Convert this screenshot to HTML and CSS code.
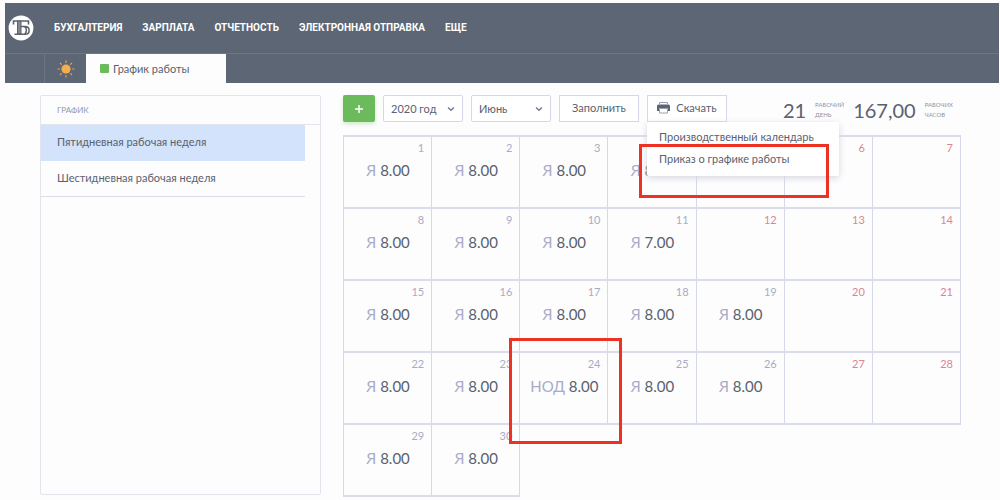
FILE: index.html
```
<!DOCTYPE html>
<html lang="ru">
<head>
<meta charset="utf-8">
<meta name="viewport" content="width=device-width, initial-scale=1">
<title>График работы</title>
<link rel="stylesheet" href="styles.css">
</head>
<body>
<header class="header">
  <div class="topbar">
    <a class="logo" href="#" aria-label="Главная">
      <svg viewBox="0 0 26 26" width="26" height="26" aria-hidden="true">
        <circle cx="13" cy="13" r="12.4" fill="#fff"/>
        <path d="M5.500 9.500V6H20.500V9.500" fill="none" stroke="#5b6069" stroke-width="1.600"/>
        <path d="M9.500 6h3.500v13h-3.500z" fill="#85888e" stroke="#5b6069" stroke-width="1"/>
        <path d="M6.500 19.300H17C22.500 19.300 22.500 11.500 17 11.500H13M16.500 11.500c2.500 1.500 2.500 6 0 7.800" fill="none" stroke="#5b6069" stroke-width="1.500"/>
      </svg>
    </a>
    <nav class="nav">
      <a href="#">БУХГАЛТЕРИЯ</a>
      <a href="#">ЗАРПЛАТА</a>
      <a href="#">ОТЧЕТНОСТЬ</a>
      <a href="#">ЭЛЕКТРОННАЯ ОТПРАВКА</a>
      <a href="#">ЕЩЕ</a>
    </nav>
  </div>
  <div class="tabs">
    <a class="sun-tab" href="#" aria-label="Сегодня">
      <svg viewBox="0 0 18 18" width="18" height="18" aria-hidden="true">
        <circle cx="9" cy="9" r="4.600" fill="#f5ad4e"/>
        <path d="M9 .5v2.300M9 15.200v2.300M.5 9h2.300M15.200 9h2.300M3 3l1.600 1.600M13.400 13.400L15 15M3 15l1.600-1.600M13.400 4.600L15 3" stroke="#e5a455" stroke-width="1.200"/>
      </svg>
    </a>
    <a class="tab" href="#"><span class="tab-mark"></span>График работы</a>
  </div>
</header>
<main class="content">
  <aside class="sidebar">
    <h2 class="sidebar-title">ГРАФИК</h2>
    <ul class="schedules">
      <li><a class="schedule schedule-active" href="#">Пятидневная рабочая неделя</a></li>
      <li><a class="schedule" href="#">Шестидневная рабочая неделя</a></li>
    </ul>
  </aside>
  <section class="workspace">
    <div class="toolbar">
      <button class="add" type="button" aria-label="Добавить">
        <svg viewBox="0 0 10 10" width="10" height="10" aria-hidden="true"><path d="M5 1v8M1 5h8" stroke="#fff" stroke-width="1.500"/></svg>
      </button>
      <div class="picker">
        <select class="select" aria-label="Год"><option>2020 год</option></select>
        <svg class="chevron" viewBox="0 0 8 6" width="8" height="6" aria-hidden="true"><path d="M1 1.500l3 2.700 3-2.700" fill="none" stroke="#737b8d" stroke-width="1.400"/></svg>
      </div>
      <div class="picker">
        <select class="select" aria-label="Месяц"><option>Июнь</option></select>
        <svg class="chevron" viewBox="0 0 8 6" width="8" height="6" aria-hidden="true"><path d="M1 1.500l3 2.700 3-2.700" fill="none" stroke="#737b8d" stroke-width="1.400"/></svg>
      </div>
      <button class="button" type="button">Заполнить</button>
      <div class="download">
        <button class="button" type="button" aria-expanded="true">
          <svg viewBox="0 0 13 13" width="13" height="13" aria-hidden="true">
            <path d="M2.500 3V1.500h8V3" fill="#fff" stroke="#9aa0ad"/>
            <path d="M1.500 3.500h10q1.500 0 1.500 1.500v5h-2V7H2v3H0V5q0-1.500 1.500-1.500z" fill="#5d6575"/>
            <path d="M2.500 7.500h8v4.500h-8z" fill="#fff" stroke="#9aa0ad"/>
          </svg>
          Скачать
        </button>
        <div class="menu">
          <a class="menu-item" href="#">Производственный календарь</a>
          <a class="menu-item" href="#">Приказ о графике работы</a>
          <span class="mark mark-menu"></span>
        </div>
      </div>
      <div class="totals">
        <strong class="total">21</strong>
        <span class="unit">РАБОЧИЙ<br>ДЕНЬ</span>
        <strong class="total">167,00</strong>
        <span class="unit">РАБОЧИХ<br>ЧАСОВ</span>
      </div>
    </div>
    <table class="calendar">
      <tbody>
        <tr>
          <td><div class="day">1</div><div class="hours"><i>Я</i> 8.00</div></td>
          <td><div class="day">2</div><div class="hours"><i>Я</i> 8.00</div></td>
          <td><div class="day">3</div><div class="hours"><i>Я</i> 8.00</div></td>
          <td><div class="day"></div><div class="hours"><i>Я</i> 8.00</div></td>
          <td><div class="day"></div></td>
          <td><div class="day day-off">6</div></td>
          <td><div class="day day-off">7</div></td>
        </tr>
        <tr>
          <td><div class="day">8</div><div class="hours"><i>Я</i> 8.00</div></td>
          <td><div class="day">9</div><div class="hours"><i>Я</i> 8.00</div></td>
          <td><div class="day">10</div><div class="hours"><i>Я</i> 8.00</div></td>
          <td><div class="day">11</div><div class="hours"><i>Я</i> 7.00</div></td>
          <td><div class="day day-off">12</div></td>
          <td><div class="day day-off">13</div></td>
          <td><div class="day day-off">14</div></td>
        </tr>
        <tr>
          <td><div class="day">15</div><div class="hours"><i>Я</i> 8.00</div></td>
          <td><div class="day">16</div><div class="hours"><i>Я</i> 8.00</div></td>
          <td><div class="day">17</div><div class="hours"><i>Я</i> 8.00</div></td>
          <td><div class="day">18</div><div class="hours"><i>Я</i> 8.00</div></td>
          <td><div class="day">19</div><div class="hours"><i>Я</i> 8.00</div></td>
          <td><div class="day day-off">20</div></td>
          <td><div class="day day-off">21</div></td>
        </tr>
        <tr>
          <td><div class="day">22</div><div class="hours"><i>Я</i> 8.00</div></td>
          <td><div class="day">23</div><div class="hours"><i>Я</i> 8.00</div></td>
          <td class="marked"><div class="day">24</div><div class="hours"><i>НОД</i> 8.00</div><span class="mark mark-day"></span></td>
          <td><div class="day">25</div><div class="hours"><i>Я</i> 8.00</div></td>
          <td><div class="day">26</div><div class="hours"><i>Я</i> 8.00</div></td>
          <td><div class="day day-off">27</div></td>
          <td><div class="day day-off">28</div></td>
        </tr>
        <tr>
          <td><div class="day">29</div><div class="hours"><i>Я</i> 8.00</div></td>
          <td><div class="day">30</div><div class="hours"><i>Я</i> 8.00</div></td>
        </tr>
      </tbody>
    </table>
  </section>
</main>
</body>
</html>
```
FILE: styles.css
```
* { box-sizing: border-box; }
body {
  margin: 0;
  min-height: 100vh;
  display: flex;
  flex-direction: column;
  background: #fdfdfe;
  color: #59616f;
  font-family: Lato, "Open Sans", sans-serif;
  font-size: 11px;
  line-height: 16px;
}
a { color: inherit; text-decoration: none; }
button, select { font: inherit; color: inherit; }

.header { margin: 3px 1px 0 5px; background: #5d6675; }
.topbar {
  display: flex;
  align-items: center;
  gap: 20px;
  height: 51px;
  padding-left: 3px;
  border-bottom: 1px solid #6d7685;
}
.logo, .logo svg { display: block; }
.nav {
  display: flex;
  gap: 20px;
  color: #fff;
  font-family: Roboto, "Open Sans", sans-serif;
  font-size: 10px;
  font-weight: 700;
}
.tabs { display: flex; height: 29px; padding-left: 39px; }
.sun-tab {
  display: flex;
  align-items: center;
  justify-content: center;
  width: 42px;
  border-left: 1px solid #6d7685;
}
.tab {
  display: flex;
  align-items: center;
  gap: 4px;
  width: 140px;
  padding-left: 14px;
  background: #fdfdfe;
}
.tab-mark { width: 9px; height: 9px; border-radius: 1px; background: #6bbb5c; }

.content {
  flex: 1;
  display: flex;
  gap: 22px;
  padding: 12px 39px 4px 40px;
}
.sidebar {
  width: 281px;
  margin-bottom: 2px;
  border: 1px solid #e4e5ec;
  border-radius: 2px;
}
.sidebar-title {
  margin: 0;
  padding: 6px 16px;
  border-bottom: 1px solid #e4e5ec;
  color: #9496b4;
  font-size: 8px;
  font-weight: 400;
}
.schedules { margin: 0 15px 0 0; padding: 0; list-style: none; }
.schedule {
  display: block;
  padding: 9px 16px 10px;
  border-bottom: 1px solid #dcddea;
}
.schedule-active { border-color: #d2e3fb; background: #d2e3fb; }

.workspace { flex: 1; min-width: 0; }
.toolbar { display: flex; gap: 8px; height: 40px; }
.add {
  display: flex;
  align-items: center;
  justify-content: center;
  width: 32px;
  height: 27px;
  padding: 0;
  border: 0;
  border-radius: 2px;
  background: #6bbb5c;
  box-shadow: 0 2px 4px #cfe8ca;
}
.picker { position: relative; height: 27px; }
.select {
  width: 80px;
  height: 27px;
  padding: 0 7px;
  appearance: none;
  border: 1px solid #d5d8ea;
  border-radius: 2px;
  background: #fff;
}
.chevron { position: absolute; right: 8px; top: 11px; pointer-events: none; }
.button {
  display: flex;
  align-items: center;
  justify-content: center;
  gap: 6px;
  min-width: 80px;
  height: 27px;
  padding: 0 8px 2px;
  border: 1px solid #d5d8ea;
  background: #fff;
}
.download { position: relative; }
.menu {
  position: absolute;
  z-index: 2;
  top: 27px;
  left: 0;
  width: 192px;
  padding: 4px 12px 6px;
  border-radius: 2px;
  background: #fff;
  box-shadow: 0 2px 7px #d5d7dd;
}
.menu-item { display: block; padding: 3px 0; white-space: nowrap; }
.mark { position: absolute; border: 3px solid #ed3224; pointer-events: none; }
.mark-menu { top: 22px; right: 10px; bottom: -22px; left: -8px; }
.totals {
  display: flex;
  align-items: center;
  gap: 9px;
  height: 30px;
  margin-left: auto;
  padding-right: 8px;
}
.total { font-size: 20px; font-weight: 400; }
.unit { color: #8f92a3; font-size: 6px; line-height: 10px; }

.calendar { width: 100%; border-collapse: collapse; table-layout: fixed; }
.calendar td {
  height: 72px;
  padding: 3px 7px 0 0;
  border: 1px solid #d5d8e9;
  border-width: 2px 1px;
  border-top-color: #dadcec;
  border-bottom-color: #dadcec;
  vertical-align: top;
}
.day { min-height: 16px; color: #a9abc6; font-size: 11px; text-align: right; }
.day-off { color: #df8393; }
.hours { padding-left: 8px; font-size: 15px; line-height: 28px; text-align: center; white-space: nowrap; }
.hours i { color: #a9abc6; font-style: normal; }
.marked { position: relative; }
.mark-day { top: -15px; right: -15px; bottom: -21px; left: -11px; }
```
